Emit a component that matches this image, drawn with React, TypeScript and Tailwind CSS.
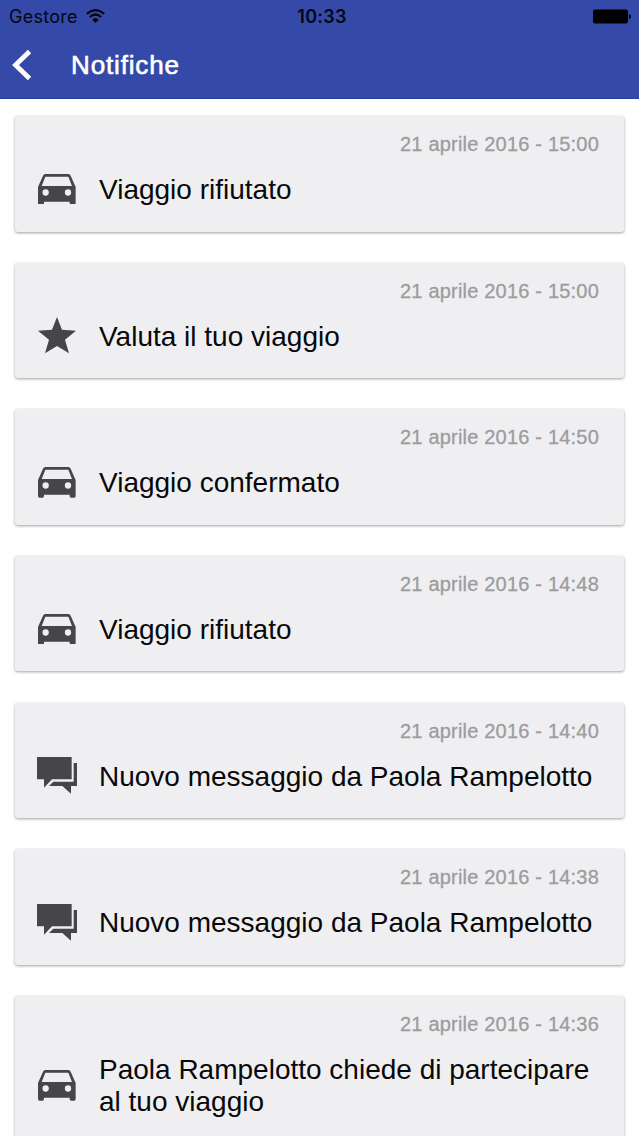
import type { ReactNode } from "react";

type NotificationKind = "car" | "star" | "chat";

interface Notification {
  id: number;
  kind: NotificationKind;
  date: string;
  text: string;
}

const notifications: Notification[] = [
  { id: 1, kind: "car", date: "21 aprile 2016 - 15:00", text: "Viaggio rifiutato" },
  { id: 2, kind: "star", date: "21 aprile 2016 - 15:00", text: "Valuta il tuo viaggio" },
  { id: 3, kind: "car", date: "21 aprile 2016 - 14:50", text: "Viaggio confermato" },
  { id: 4, kind: "car", date: "21 aprile 2016 - 14:48", text: "Viaggio rifiutato" },
  { id: 5, kind: "chat", date: "21 aprile 2016 - 14:40", text: "Nuovo messaggio da Paola Rampelotto" },
  { id: 6, kind: "chat", date: "21 aprile 2016 - 14:38", text: "Nuovo messaggio da Paola Rampelotto" },
  { id: 7, kind: "car", date: "21 aprile 2016 - 14:36", text: "Paola Rampelotto chiede di partecipare al tuo viaggio" },
];

const icons: Record<NotificationKind, ReactNode> = {
  car: (
    <svg viewBox="0 0 113 92" className="w-[37.67px] h-[30.67px]" fill="currentColor" fillRule="evenodd">
      <path d="M22 0H91Q96 0 98 5L113 39V87Q113 92 108 92H100Q95 92 95 87V83H18V87Q18 92 13 92H5Q0 92 0 87V39L15 5Q17 0 22 0ZM22 8L11 36H102L91 8ZM23 46a9.5 9.5 0 1 0 0 19a9.5 9.5 0 1 0 0-19ZM90 46a9.5 9.5 0 1 0 0 19a9.5 9.5 0 1 0 0-19Z" />
    </svg>
  ),
  star: (
    <svg viewBox="0 0 114 109" className="w-[38px] h-[36.33px]" fill="currentColor">
      <path d="M57 0L72 38.500L114 41L81 68L93 109L57 87L21 109L33 68L0 41L42 38.500Z" />
    </svg>
  ),
  chat: (
    <svg viewBox="0 0 122 110" className="w-[40.67px] h-[36.67px]" fill="currentColor">
      <path d="M0 0H104V67H45L21 92V67H0Z" />
      <path d="M110 18H122V87H102V110L76 87H36L49 74H110Z" />
    </svg>
  ),
};

function StatusBar() {
  return (
    <div className="grid grid-cols-3 items-center h-8 pl-[9px] pr-2 text-[#05060f]">
      <div className="flex items-center gap-2">
        <span className="font-[Inter,sans-serif] text-[18px] tracking-[0.25px]">Gestore</span>
        <svg viewBox="0 0 57 42" className="w-[19px] h-[14px]" fill="none" stroke="currentColor" strokeWidth="6.5">
          <path d="M2.500 14.500Q28.500 -8 54.500 14.500" />
          <path d="M11.500 24Q28.500 9 45.500 24" />
          <path d="M28.500 42L18.500 32Q28.500 22.500 38.500 32Z" fill="currentColor" stroke="none" />
        </svg>
      </div>
      <span className="pl-1 text-center font-[Inter,sans-serif] text-[18px] font-semibold tracking-[0.25px]">10:33</span>
      <svg viewBox="0 0 38 15" className="w-[38px] h-[15px] justify-self-end" fill="#000">
        <rect x="0" y="0.500" width="35" height="14" rx="2" />
        <path d="M36 5Q38 5.500 38 7.500T36 10Z" />
      </svg>
    </div>
  );
}

function NotificationCard({ item }: { item: Notification }) {
  return (
    <li className="rounded-[3px] bg-[#efeff1] pt-4 pr-[25px] pb-[25px] shadow-[0_1px_3px_rgba(0,0,0,0.38)]">
      <p className="text-right text-[20px] leading-6 text-[#9c9c9f] tracking-[0.2px] [-webkit-text-stroke:0.3px_#9c9c9f]">
        {item.date}
      </p>
      <div className="mt-[18px] flex items-center">
        <div className="-mt-[10.5px] -mb-2 flex w-[84px] shrink-0 justify-center text-[#464648]">{icons[item.kind]}</div>
        <p className="flex-1 text-[28px] leading-[32.5px] text-[#08080a]">{item.text}</p>
      </div>
    </li>
  );
}

export default function App() {
  return (
    <div className="h-[1136px] w-full overflow-hidden bg-white font-['Liberation_Sans',Arial,sans-serif]">
      <header className="h-[98.5px] bg-[#3449a8] border-b border-[#2a3b9e]">
        <StatusBar />
        <div className="flex h-[66px] items-center pl-3">
          <button type="button" aria-label="Indietro" className="text-white">
            <svg viewBox="0 0 20 32" className="w-5 h-8" fill="none" stroke="currentColor" strokeWidth="4.8">
              <path d="M17.500 2.500L3.500 16L17.500 29.500" />
            </svg>
          </button>
          <h1 className="ml-[39px] text-[26px] tracking-[0.85px] text-white [-webkit-text-stroke:0.6px_white]">
            Notifiche
          </h1>
        </div>
      </header>

      <ul className="flex flex-col gap-[31.17px] px-[15px] pt-[17.5px]">
        {notifications.map((item) => (
          <NotificationCard key={item.id} item={item} />
        ))}
      </ul>
    </div>
  );
}
